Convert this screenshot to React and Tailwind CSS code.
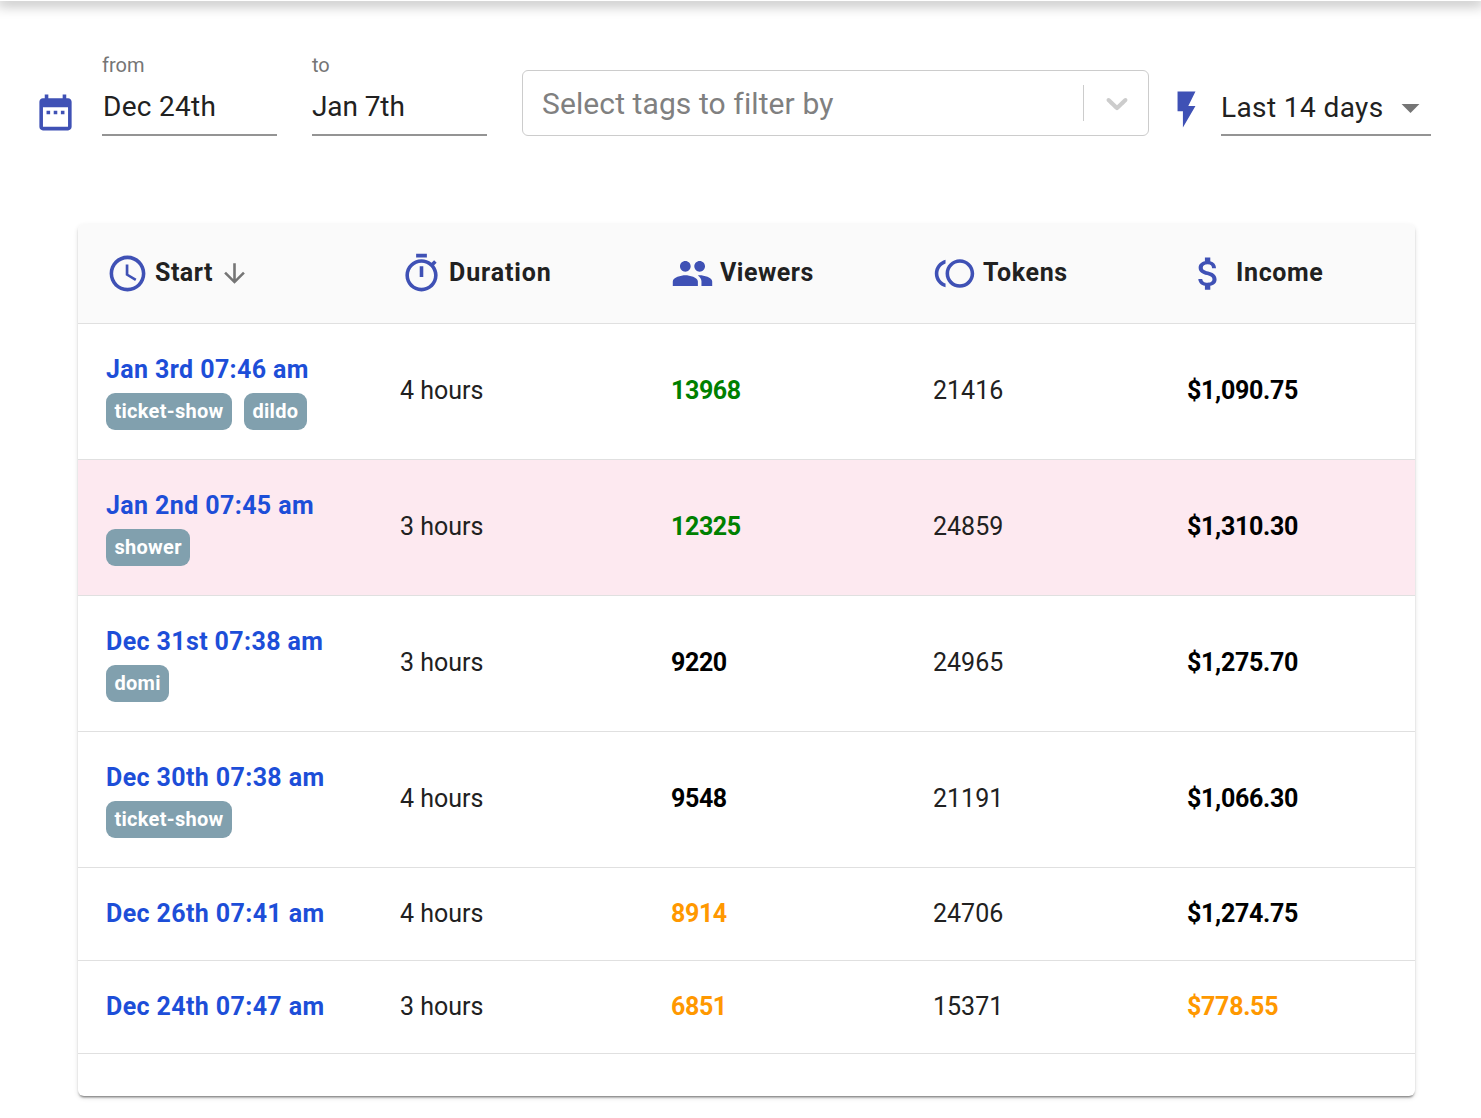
const INDIGO = '#3f51b5'

const ROWS = [
  { start: 'Jan 3rd 07:46 am', tags: ['ticket-show', 'dildo'], duration: '4 hours', viewers: '13968', viewersColor: 'text-[#008000]', tokens: '21416', income: '$1,090.75' },
  { start: 'Jan 2nd 07:45 am', tags: ['shower'], duration: '3 hours', viewers: '12325', viewersColor: 'text-[#008000]', tokens: '24859', income: '$1,310.30', pink: true },
  { start: 'Dec 31st 07:38 am', tags: ['domi'], duration: '3 hours', viewers: '9220', viewersColor: 'text-black', tokens: '24965', income: '$1,275.70' },
  { start: 'Dec 30th 07:38 am', tags: ['ticket-show'], duration: '4 hours', viewers: '9548', viewersColor: 'text-black', tokens: '21191', income: '$1,066.30' },
  { start: 'Dec 26th 07:41 am', tags: [], duration: '4 hours', viewers: '8914', viewersColor: 'text-[#ff9800]', tokens: '24706', income: '$1,274.75' },
  { start: 'Dec 24th 07:47 am', tags: [], duration: '3 hours', viewers: '6851', viewersColor: 'text-[#ff9800]', tokens: '15371', income: '$778.55', incomeColor: 'text-[#ff9800]' },
]

const COLS = 'grid grid-cols-[294px_271px_262px_254px_1fr] items-center'

function Icon({ d, size = 43, color = INDIGO, className = '', viewBox = '0 0 24 24' }) {
  return (
    <svg width={size} height={size} viewBox={viewBox} fill={color} className={`shrink-0 ${className}`}>
      <path d={d} />
    </svg>
  )
}

const icons = {
  calendar: 'M9 11H7v2h2v-2zm4 0h-2v2h2v-2zm4 0h-2v2h2v-2zm2-7h-1V2h-2v2H8V2H6v2H5c-1.11 0-1.99.9-1.99 2L3 20c0 1.1.89 2 2 2h14c1.1 0 2-.9 2-2V6c0-1.1-.9-2-2-2zm0 16H5V9h14v11z',
  clock: 'M11.99 2C6.47 2 2 6.48 2 12s4.47 10 9.99 10C17.52 22 22 17.52 22 12S17.52 2 11.99 2zM12 20c-4.42 0-8-3.58-8-8s3.58-8 8-8 8 3.58 8 8-3.58 8-8 8zM12.5 7H11v6l5.25 3.15.75-1.23-4.5-2.67z',
  timer: 'M15 1H9v2h6V1zm-4 13h2V8h-2v6zm8.03-6.61l1.42-1.42c-.43-.51-.9-.99-1.41-1.41l-1.42 1.42C16.07 4.74 14.12 4 12 4c-4.97 0-9 4.03-9 9s4.02 9 9 9 9-4.03 9-9c0-2.12-.74-4.07-1.97-5.61zM12 20c-3.87 0-7-3.13-7-7s3.13-7 7-7 7 3.13 7 7-3.13 7-7 7z',
  people: 'M16 11c1.66 0 2.99-1.34 2.99-3S17.66 5 16 5c-1.66 0-3 1.34-3 3s1.34 3 3 3zm-8 0c1.66 0 2.99-1.34 2.99-3S9.66 5 8 5C6.34 5 5 6.34 5 8s1.34 3 3 3zm0 2c-2.33 0-7 1.17-7 3.5V19h14v-2.5c0-2.33-4.67-3.5-7-3.5zm8 0c-.29 0-.62.02-.97.05 1.16.84 1.97 1.97 1.97 3.45V19h6v-2.5c0-2.33-4.67-3.5-7-3.5z',
  toll: 'M15 4c-4.42 0-8 3.58-8 8s3.58 8 8 8 8-3.58 8-8-3.58-8-8-8zm0 14c-3.31 0-6-2.69-6-6s2.69-6 6-6 6 2.69 6 6-2.69 6-6 6zM3 12c0-2.61 1.67-4.83 4-5.65V4.26C3.55 5.15 1 8.27 1 12s2.55 6.85 6 7.74v-2.09c-2.33-.82-4-3.04-4-5.65z',
  money: 'M11.8 10.9c-2.27-.59-3-1.2-3-2.15 0-1.09 1.01-1.85 2.7-1.85 1.78 0 2.44.85 2.5 2.1h2.21c-.07-1.72-1.12-3.3-3.21-3.81V3h-3v2.16c-1.94.42-3.5 1.68-3.5 3.61 0 2.31 1.91 3.46 4.7 4.13 2.5.6 3 1.48 3 2.41 0 .69-.49 1.79-2.7 1.79-2.06 0-2.87-.92-2.98-2.1h-2.2c.12 2.19 1.76 3.42 3.68 3.83V21h3v-2.15c1.95-.37 3.5-1.5 3.5-3.55 0-2.84-2.43-3.81-4.7-4.4z',
  flash: 'M7 2v11h3v9l7-12h-4l4-8z',
  arrowDown: 'M20 12l-1.41-1.41L13 16.17V4h-2v12.17l-5.58-5.59L4 12l8 8 8-8z',
  caret: 'M7 10l5 5 5-5z',
  chevron: 'M4.516 7.548c0.436-0.446 1.043-0.481 1.576 0l3.908 3.747 3.908-3.747c0.533-0.481 1.141-0.446 1.576 0 0.436 0.445 0.408 1.197 0 1.615-0.406 0.418-4.695 4.502-4.695 4.502-0.217 0.223-0.502 0.335-0.789 0.335s-0.572-0.112-0.789-0.335c0 0-4.287-4.084-4.695-4.502s-0.436-1.17 0-1.615z',
}

function DateField({ label, value, valueClass }) {
  return (
    <div className="w-[175px]">
      <div className="text-[20px] leading-[24px] text-[#757575]">{label}</div>
      <div className={`mt-[8px] h-[51px] border-b-2 border-[#949494] text-[28px] leading-[44px] text-[#212121] ${valueClass}`}>{value}</div>
    </div>
  )
}

function HeadCell({ icon, label, gap, pad, tracking = 'tracking-[0.5px]', children }) {
  return (
    <div className={`flex items-center ${gap} ${pad}`}>
      <Icon d={icon} />
      <span className={`pb-[2px] text-[25px] font-bold text-[#212121] ${tracking}`}>{label}</span>
      {children}
    </div>
  )
}

function Row({ row }) {
  const tagged = row.tags.length > 0
  return (
    <div className={`${COLS} border-b border-[#e0e0e0] text-[25px] text-[#212121] ${tagged ? 'h-[136px] pb-[2px]' : 'h-[93px]'} ${row.pink ? 'bg-[#fde9f0]' : ''}`}>
      <div className={`pl-[28px] ${tagged ? 'mt-[4px]' : ''}`}>
        <div className="text-[25px] font-bold leading-[30px] tracking-[0.38px] text-[#1d4ed8]">{row.start}</div>
        {tagged && (
          <div className="mt-[8px] flex gap-[12px]">
            {row.tags.map(t => (
              <span key={t} className="h-[37px] rounded-[9px] bg-[#81a0ae] px-[8.5px] text-[20px] font-bold leading-[37px] tracking-[0.28px] text-white">{t}</span>
            ))}
          </div>
        )}
      </div>
      <div className="pl-[28px]">{row.duration}</div>
      <div className={`pl-[28px] font-bold tracking-[-0.4px] ${row.viewersColor}`}>{row.viewers}</div>
      <div className="pl-[28px]">{row.tokens}</div>
      <div className={`pl-[28px] font-bold tracking-[-0.3px] ${row.incomeColor || 'text-black'}`}>{row.income}</div>
    </div>
  )
}

export default function App() {
  return (
    <div className="min-h-[1118px] bg-white font-['Roboto',sans-serif]">
      <div className="h-[1px] shadow-[0_0_14px_3px_rgba(0,0,0,0.4)]" />

      <div className="flex items-end pl-[34px] pt-[52px]">
        <Icon d={icons.calendar} className="mb-[2px]" />
        <div className="ml-[25px]"><DateField label="from" value="Dec 24th" valueClass="pl-[1px] tracking-[0.3px]" /></div>
        <div className="ml-[35px]"><DateField label="to" value="Jan 7th" valueClass="tracking-[-0.1px]" /></div>
        <div className="ml-[35px] flex h-[66px] w-[627px] items-center rounded-[6px] border border-[#cccccc] pl-[19px]">
          <span className="flex-1 text-[30px] tracking-[0.1px] text-[#808080]">Select tags to filter by</span>
          <span className="h-[36px] w-px bg-[#cccccc]" />
          <Icon d={icons.chevron} viewBox="0 0 20 20" size={36} color="#cccccc" className="ml-[15px] mr-[13px]" />
        </div>
        <Icon d={icons.flash} className="mb-[5px] ml-[16px]" />
        <div className="ml-[13px] flex h-[56px] w-[210px] items-center border-b-2 border-[#949494]">
          <span className="flex-1 pt-[2px] text-[28px] tracking-[0.4px] text-[#212121]">Last 14 days</span>
          <Icon d={icons.caret} color="#757575" className="translate-x-[1px]" />
        </div>
      </div>

      <div className="ml-[78px] mt-[88px] w-[1337px] overflow-hidden rounded-[6px] bg-white pb-[42px] shadow-[0_3px_2px_-2px_rgba(0,0,0,0.35),0_2px_2px_0_rgba(0,0,0,0.14),0_2px_5px_0_rgba(0,0,0,0.12)]">
        <div className={`${COLS} h-[100px] border-b border-[#e0e0e0] bg-[#fafafa]`}>
          <HeadCell icon={icons.clock} label="Start" gap="gap-[6px]" pad="pl-[28px]">
            <Icon d={icons.arrowDown} size={31} color="#757575" />
          </HeadCell>
          <HeadCell icon={icons.timer} label="Duration" gap="gap-[6px]" pad="pl-[28px]" tracking="tracking-[0.9px]" />
          <HeadCell icon={icons.people} label="Viewers" gap="gap-[6px]" pad="pl-[28px]" />
          <HeadCell icon={icons.toll} label="Tokens" gap="gap-[7px]" pad="pl-[28px]" tracking="tracking-[0.65px]" />
          <HeadCell icon={icons.money} label="Income" gap="gap-[6px]" pad="pl-[28px]" tracking="tracking-[0.65px]" />
        </div>
        {ROWS.map(r => <Row key={r.start} row={r} />)}
      </div>
    </div>
  )
}
